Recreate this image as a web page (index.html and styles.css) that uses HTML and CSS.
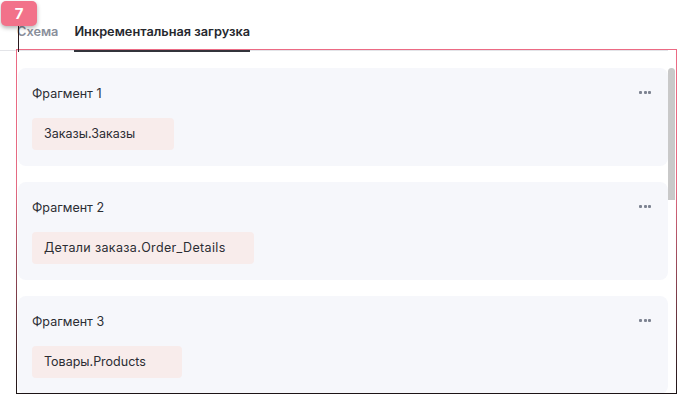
FILE: index.html
```html
<!DOCTYPE html>
<html>
<head>
    <meta charset="utf-8">
    <title>Инкрементальная загрузка</title>
    <link rel="stylesheet" href="styles.css">
</head>
<body>
    <div class="page">
        <div class="tabs">
            <div class="tab">Схема</div>
            <div class="tab active">Инкрементальная загрузка</div>
        </div>

        <div class="panel-wrap">
            <div class="panel">
                <div class="fragment">
                    <div class="fragment-head">
                        <span class="fragment-title">Фрагмент 1</span>
                        <span class="more"><i></i><i></i><i></i></span>
                    </div>
                    <div class="chip chip-s">Заказы.Заказы</div>
                </div>
                <div class="fragment">
                    <div class="fragment-head">
                        <span class="fragment-title">Фрагмент 2</span>
                        <span class="more"><i></i><i></i><i></i></span>
                    </div>
                    <div class="chip chip-l">Детали заказа.Order_Details</div>
                </div>
                <div class="fragment">
                    <div class="fragment-head">
                        <span class="fragment-title">Фрагмент 3</span>
                        <span class="more"><i></i><i></i><i></i></span>
                    </div>
                    <div class="chip chip-m">Товары.Products</div>
                </div>
            </div>
            <div class="scroll-thumb"></div>
        </div>

        <!-- аннотация -->
        <div class="highlight"></div>
        <div class="marker-line"></div>
        <div class="marker">7</div>
    </div>
</body>
</html>
```

FILE: styles.css
```css
body { margin: 0; font-family: Inter, "Noto Sans", sans-serif; color: #2b2d33; background: #fff; }

.page { position: relative; width: 678px; height: 397px; overflow: hidden; }

/* Вкладки */
.tabs { display: flex; gap: 16px; padding: 0 0 0 17px; height: 50px; border-bottom: 1px solid #e3e4e8; margin-right: 10px; }
.tab { display: flex; align-items: center; padding-top: 13px; font-size: 12.75px; font-weight: 600; color: #8a8f9b; border-bottom: 2px solid transparent; margin-bottom: -1px; }
.tab.active { color: #26282e; border-bottom: 3px solid #32343b; margin-bottom: -2px; }

/* Список фрагментов */
.panel-wrap { position: relative; margin-top: 17px; height: 329px; }
.panel { height: 100%; overflow: hidden; padding: 0 10px 0 18px; display: flex; flex-direction: column; gap: 16px; }
.scroll-thumb { position: absolute; left: 668px; top: 0; width: 7px; height: 132px; background: #c9c9c9; border-radius: 4px 4px 0 0; }

.fragment { flex: none; background: #f6f7fb; border-radius: 8px; padding: 16px 14px; }
.fragment-head { display: flex; justify-content: space-between; align-items: center; height: 18px; margin-bottom: 16px; }
.fragment-title { font-size: 12.5px; color: #2b2d33; }
.more { display: flex; gap: 1.5px; margin-right: 3px; margin-top: -2px; }
.more i { width: 3px; height: 3px; background: #7d8391; border-radius: 1px; }

.chip { box-sizing: border-box; background: #f8eceb; border-radius: 4px; height: 32px; line-height: 32px; padding: 0 12px; font-size: 12.5px; color: #2b2d33; }
.chip-s { width: 142px; }
.chip-m { width: 150px; }
.chip-l { width: 222px; letter-spacing: 0.35px; }

/* Аннотация */
.highlight { position: absolute; left: 16px; top: 49px; width: 659px; height: 343px; border: 1px solid; border-image: linear-gradient(#ec6a84, #e46a82 40%, #1c1416) 1; pointer-events: none; }
.marker-line { position: absolute; left: 18px; top: 24px; width: 1px; height: 28px; background: #2a1a1e; }
.marker { position: absolute; left: 1px; top: 1px; width: 36px; height: 25px; border-radius: 5px; background: #f2728a; color: #fff; font-size: 15px; font-weight: 700; display: flex; align-items: center; justify-content: center; box-shadow: 0 2px 4px rgba(0,0,0,0.3); }
```
